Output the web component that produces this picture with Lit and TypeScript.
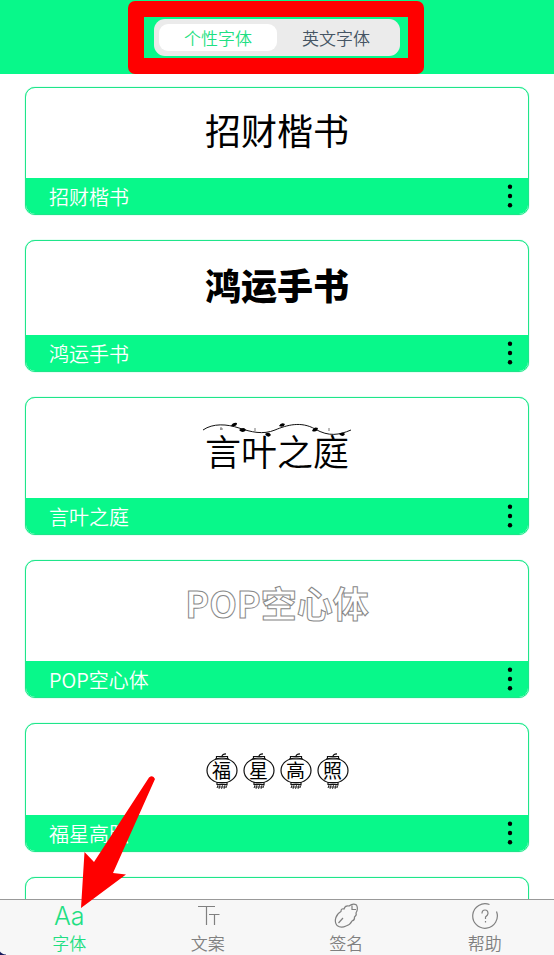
import { LitElement, html, css, svg } from "lit";
import { customElement, property, state } from "lit/decorators.js";
import { classMap } from "lit/directives/class-map.js";

type Look = "kai" | "bold" | "vine" | "hollow" | "lantern";

interface FontEntry {
  name: string;
  look: Look;
}

const FONTS: FontEntry[] = [
  { name: "招财楷书", look: "kai" },
  { name: "鸿运手书", look: "bold" },
  { name: "言叶之庭", look: "vine" },
  { name: "POP空心体", look: "hollow" },
  { name: "福星高照", look: "lantern" },
];

@customElement("font-card")
class FontCard extends LitElement {
  @property() name = "";
  @property({ reflect: true }) look: Look = "kai";

  static styles = css`
    :host {
      display: block;
      overflow: hidden;
      flex: none;
      border: 1px solid #1fe58a;
      border-radius: 10px;
      background: #fff;
      box-shadow: 0 0 1px #08f88a;
    }
    .preview {
      display: flex;
      justify-content: center;
      align-items: center;
      height: 90px;
      box-sizing: border-box;
      font-size: 36px;
      line-height: 40px;
      color: #000;
    }
    .kai {
      padding-bottom: 8px;
      font-weight: 400;
    }
    .bold {
      height: 94px;
      padding-bottom: 8px;
      font-weight: 900;
    }
    .vine {
      height: 100px;
      padding-top: 4px;
      font-weight: 350;
    }
    .hollow {
      height: 100px;
      padding-bottom: 18px;
      font-weight: 700;
      color: #fff;
      -webkit-text-stroke: 1px #888;
    }
    .lantern {
      gap: 5px;
      height: 91px;
      padding-top: 4px;
      font-size: 19px;
      line-height: 24px;
    }
    .word {
      position: relative;
    }
    .branch {
      position: absolute;
      left: -2px;
      top: -8px;
      width: 148px;
      height: 20px;
    }
    .lamp {
      position: relative;
      display: flex;
      justify-content: center;
      box-sizing: border-box;
      width: 32px;
      height: 38px;
      padding-top: 5px;
    }
    .lamp svg {
      position: absolute;
      inset: 0;
    }
    .bar {
      display: flex;
      align-items: center;
      justify-content: space-between;
      height: 36px;
      padding: 0 8px 0 23px;
      background: #08f88a;
      color: #fff;
      font-size: 20px;
      line-height: 24px;
      font-weight: 350;
    }
    .title {
      padding-top: 2px;
    }
    .more {
      display: flex;
      padding: 4px;
      border: 0;
      background: none;
    }
  `;

  private preview() {
    if (this.look === "lantern") {
      return [...this.name].map(
        (c) => html`<span class="lamp">
          <svg width="32" height="38" viewBox="0 0 32 38" fill="none" stroke="#111" aria-hidden="true">
            <ellipse cx="16" cy="17.5" rx="15" ry="12.5" stroke-width="1.2" />
            <path d="M10.500 6V3.500H21.500V6M9 6H23M11 29.500H21V31.500H11ZM16 3.500Q16 1 20 .8" stroke-width="1.2" />
            <path d="M12 32l-1 3M14 32l-1 4M16.500 32l-1 4M19 32l-1 4M21 32l-1 3M11 34h9" stroke-width=".8" />
          </svg>
          ${c}
        </span>`
      );
    }
    if (this.look === "vine") {
      return html`<span class="word">${this.name}
        <svg class="branch" viewBox="0 0 148 20" aria-hidden="true">
          <path d="M0 8C10 1 24 2 36 6S60 13 72 8S98 -1 112 7S136 13 148 8" fill="none" stroke="#111" />
          <path d="M28 4q2-4 6-3q0 4-6 3M36 8q5-4 7 0q-3 4-7 0M76 4q2-4 6-2q-1 4-6 2M109 9q2-5 6-3q-1 5-6 3M62 12q4-3 6 1q-3 4-6-1M136 12q4-3 6 0q-2 4-6 0" fill="#000" />
          <path d="M18 5v3M20 7h-3M52 6v3M126 6v3" stroke="#777" />
        </svg>
      </span>`;
    }
    return html`<span>${this.name}</span>`;
  }

  render() {
    return html`
      <div class="preview ${this.look}">${this.preview()}</div>
      <div class="bar">
        <span class="title">${this.name}</span>
        <button class="more" aria-label=${this.name}>
          <svg width="12" height="26" viewBox="0 0 12 26" aria-hidden="true">
            <circle cx="6" cy="3.7" r="2.2" />
            <circle cx="6" cy="13" r="2.2" />
            <circle cx="6" cy="22.3" r="2.2" />
          </svg>
        </button>
      </div>
    `;
  }
}

const TABS = [
  { label: "字体", icon: null },
  {
    label: "文案",
    icon: svg`<path d="M4 4.500H21M12.500 4.500V23M15 12.500H25.500M20.500 12.500V23" />`,
  },
  {
    label: "签名",
    icon: svg`<path d="M5 23.500C1.500 19 4 12 9 9.500Q9 6 12 7Q13 3 17 4Q21 1 24.500 3Q26.500 7 24 11Q25 13 22.500 15Q23 18 20 19Q18 23 14 24Q9 26.500 5 23.500M6.500 21L11 16M20 3.500V7.500H24" />`,
  },
  {
    label: "帮助",
    icon: svg`<path d="M18.500 2.500A12.300 12.300 0 1 0 25.500 9.500M11 11.500Q11 8 14 8T17 11.500Q17 13 14.500 15V17M14.500 19V20.500" />`,
  },
];

@customElement("app-root")
class AppRoot extends LitElement {
  @state() private category = 0;
  @state() private tab = 0;

  static styles = css`
    :host {
      display: flex;
      flex-direction: column;
      position: relative;
      height: 100vh;
      background: #fff;
      font-family: "Noto Sans CJK SC", sans-serif;
    }
    button {
      font-family: inherit;
      cursor: pointer;
    }
    .top {
      position: relative;
      flex: none;
      display: flex;
      justify-content: center;
      padding: 19px 0 18px;
      background: #08f88a;
    }
    .segments {
      display: flex;
      box-sizing: border-box;
      width: 246px;
      padding: 5px;
      border-radius: 11px;
      background: #ebebeb;
    }
    .segment {
      flex: 1;
      padding: 0;
      border: 0;
      border-radius: 9px;
      background: none;
      color: #455563;
      font-size: 17px;
      line-height: 27px;
      font-weight: 350;
    }
    .segment.on {
      background: #fff;
      color: #1fdf83;
    }
    .frame {
      position: absolute;
      top: 1px;
      left: 50%;
      box-sizing: border-box;
      width: 296px;
      height: 73px;
      margin-left: -149px;
      border: 16px solid #f00;
      border-radius: 7px;
      pointer-events: none;
    }
    .list {
      flex: 1;
      min-height: 0;
      overflow: auto;
      scrollbar-width: none;
      display: flex;
      flex-direction: column;
      gap: 25px;
      padding: 13px 25px 0;
    }
    .tabs {
      position: relative;
      flex: none;
      display: flex;
      border-top: 1px solid #999;
      background: #f7f7f7;
    }
    .tabs::before {
      content: "";
      position: absolute;
      left: 0;
      bottom: 0;
      width: 6px;
      height: 8px;
      background: radial-gradient(circle at 100% 0, transparent 7px, #14195c 8px);
    }
    .tab {
      flex: 1;
      display: flex;
      flex-direction: column;
      align-items: center;
      padding: 2px 0 0;
      border: 0;
      background: none;
      color: #808080;
      font-size: 17px;
      line-height: 25px;
      font-weight: 350;
    }
    .tab.on {
      color: #1fdf83;
    }
    .tab svg {
      fill: none;
      stroke: currentColor;
      stroke-width: 1.2;
    }
    .glyph {
      height: 28px;
      font-family: Inter, "Liberation Sans", sans-serif;
      font-size: 25px;
      font-weight: 300;
      line-height: 28px;
    }
    .arrow {
      position: absolute;
      left: 78px;
      bottom: 44px;
      pointer-events: none;
    }
  `;

  render() {
    return html`
      <header class="top">
        <div class="segments">
          ${["个性字体", "英文字体"].map(
            (label, i) => html`<button
              class=${classMap({ segment: true, on: i === this.category })}
              aria-pressed=${i === this.category}
              @click=${() => (this.category = i)}
            >${label}</button>`
          )}
        </div>
        <div class="frame"></div>
      </header>
      <main class="list">
        ${FONTS.map((f) => html`<font-card name=${f.name} look=${f.look}></font-card>`)}
        <font-card></font-card>
      </main>
      <nav class="tabs">
        ${TABS.map(
          (t, i) => html`<button
            class=${classMap({ tab: true, on: i === this.tab })}
            @click=${() => (this.tab = i)}
          >
            ${t.icon
              ? html`<svg width="28" height="28" viewBox="0 0 28 28" aria-hidden="true">${t.icon}</svg>`
              : html`<span class="glyph">Aa</span>`}
            <span>${t.label}</span>
          </button>`
        )}
      </nav>
      <svg class="arrow" width="80" height="136" viewBox="0 0 80 136" aria-hidden="true">
        <path d="M3 133L6.500 77L16 87L71 2.500Q75 -.5 77 4L35 98L48 99.500Z" fill="#f00" />
      </svg>
    `;
  }
}
